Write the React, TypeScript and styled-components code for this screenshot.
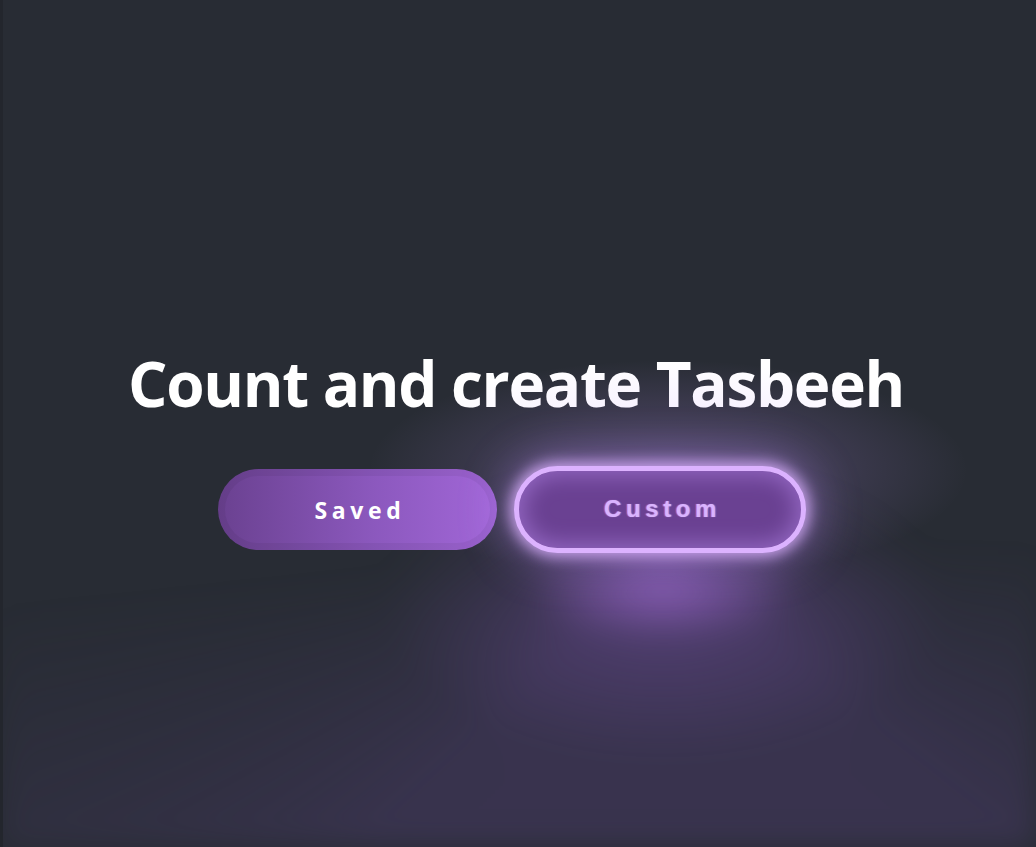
import React from "react";
import styled, { createGlobalStyle } from "styled-components";

const Global = createGlobalStyle`
  html, body { margin: 0; padding: 0; background: #282c34; }
  #root { min-height: 100vh; }
`;

const Page = styled.main`
  position: relative;
  box-sizing: border-box;
  height: 847px;
  overflow: hidden;
  border-left: 3px solid #23262d;
  background-color: #282c34;
  display: flex;
  flex-direction: column;
  align-items: center;
  padding-top: 346px;
`;

const Beam = styled.div`
  position: absolute;
  inset: 0;
  pointer-events: none;
  background:
    radial-gradient(ellipse 140px 50px at 660px 590px, rgba(140, 95, 185, 0.85), rgba(140, 95, 185, 0) 100%),
    radial-gradient(ellipse 280px 150px at 660px 610px, rgba(120, 80, 170, 0.4), rgba(120, 80, 170, 0) 100%),
    conic-gradient(
      from 90deg at 660px 550px,
      rgba(110, 75, 160, 0) 0deg,
      rgba(110, 75, 160, 0.24) 40deg,
      rgba(110, 75, 160, 0.24) 135deg,
      rgba(110, 75, 160, 0) 175deg,
      rgba(110, 75, 160, 0) 360deg
    );
  filter: blur(14px);
`;

const Halo = styled.div`
  position: absolute;
  inset: 0;
  pointer-events: none;
  z-index: 2;
  background: radial-gradient(ellipse 300px 110px at 665px 470px, rgba(195, 150, 255, 0.3), rgba(195, 150, 255, 0) 100%);
`;

const Title = styled.h1`
  position: relative;
  z-index: 1;
  margin: 0 0 0 -7px;
  font-family: "Open Sans", "Noto Sans", sans-serif;
  font-weight: 700;
  font-size: 62px;
  letter-spacing: -1.3px;
  line-height: 74px;
  color: #ffffff;
`;

const Row = styled.div`
  position: relative;
  z-index: 3;
  display: flex;
  align-items: center;
  gap: 17px;
  margin-top: 46px;
  margin-left: -15px;
`;

const SavedButton = styled.button`
  width: 279px;
  height: 81px;
  border: none;
  border-radius: 41px;
  background: linear-gradient(90deg, #6a4190 0%, #8b58bd 55%, #a267d8 100%);
  box-shadow: inset 0 0 0 7px rgba(0, 0, 0, 0.05);
  color: #ffffff;
  font-family: "Open Sans", "Noto Sans", sans-serif;
  font-weight: 700;
  font-size: 23px;
  letter-spacing: 4.6px;
  padding: 0 0 0 5px;
  display: flex;
  align-items: center;
  justify-content: center;
  cursor: pointer;
`;

const CustomButton = styled.button`
  box-sizing: border-box;
  width: 292px;
  height: 87px;
  border: 5px solid #dcb2ff;
  border-radius: 44px;
  background: #6a4192;
  box-shadow:
    0 0 14px 4px rgba(220, 178, 255, 0.8),
    0 0 44px 12px rgba(190, 140, 255, 0.35),
    inset 0 0 22px 4px rgba(200, 150, 255, 0.45);
  color: #d9b4ff;
  font-family: "Liberation Sans", Arial, sans-serif;
  font-weight: 700;
  font-size: 24px;
  letter-spacing: 4.6px;
  padding: 0 0 2px 5px;
  text-shadow: -1px 0 1px rgba(255, 150, 200, 0.5), 1px 0 1px rgba(140, 170, 255, 0.5);
  display: flex;
  align-items: center;
  justify-content: center;
  cursor: pointer;
`;

export default function App() {
  return (
    <>
      <Global />
      <Page>
        <Beam />
        <Halo />
        <Title>Count and create Tasbeeh</Title>
        <Row>
          <SavedButton>Saved</SavedButton>
          <CustomButton>Custom</CustomButton>
        </Row>
      </Page>
    </>
  );
}
